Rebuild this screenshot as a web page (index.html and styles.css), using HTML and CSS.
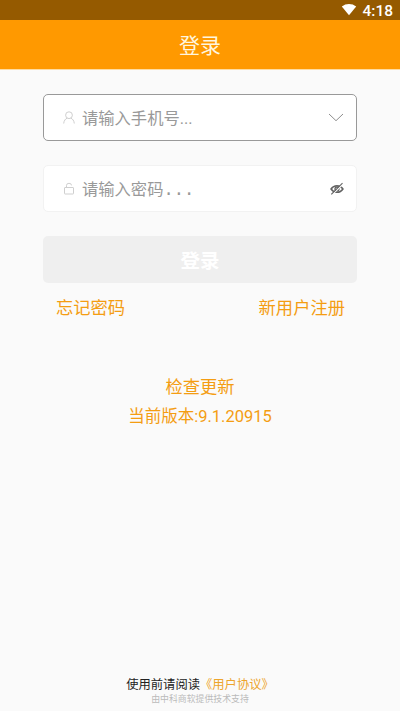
FILE: index.html
```html
<!DOCTYPE html>
<html lang="zh-CN">
<head>
<meta charset="utf-8">
<title>登录</title>
<link rel="stylesheet" href="styles.css">
</head>
<body>
<div class="screen">
  <div class="status">
    <svg class="wifi" width="16" height="13" viewBox="0 0 16 13"><path d="M8 12.300 .8 3.400Q4 1 8 1t7.200 2.400Z" fill="#fff"/></svg>
    <span class="time">4:18</span>
  </div>
  <header class="bar">登录</header>
  <main class="form">
    <div class="field phone">
      <svg class="lead" width="14" height="14" viewBox="0 0 14 14" fill="none" stroke="#cfcfcf"><circle cx="7" cy="4.200" r="3.400"/><path d="M1.700 12.500C2 9.500 3.400 7.800 5.300 7.100M12.300 12.500C12 9.500 10.600 7.800 8.700 7.100"/></svg>
      <span class="hint">请输入手机号...</span>
      <svg class="arrow" width="16" height="9" viewBox="0 0 16 9" fill="none" stroke="#8e8e8e"><path d="M1 1 8 7.700 15 1"/></svg>
    </div>
    <div class="field">
      <svg class="lead" width="14" height="14" viewBox="0 0 14 14" fill="none" stroke="#cfcfcf"><rect x="2.500" y="5.500" width="9" height="6.500" rx=".5"/><path d="M4.500 5.500V3.400Q4.500 1.300 7 1.300T9.500 3.400"/></svg>
      <span class="hint">请输入密码<span class="dots">...</span></span>
      <svg class="eye" width="14" height="14" viewBox="0 0 14 14" fill="none" stroke="#626262"><path d="M1 7Q3.200 3.700 7 3.700T13 7Q10.800 10.300 7 10.300T1 7Z" stroke-width="1.400"/><circle cx="7" cy="7" r="2" stroke-width="1.300"/><path d="M2.200 12.800 12.800 2" stroke="#fff" stroke-width="1.200"/><path d="M1.300 12.300 12.500 1.200" stroke-width="1.100"/></svg>
    </div>
    <div class="submit">登录</div>
    <div class="links"><span>忘记密码</span><span>新用户注册</span></div>
    <div class="update">检查更新</div>
    <div class="version">当前版本:9.1.20915</div>
  </main>
  <footer class="foot">
    <div class="terms">使用前请阅读<span class="agree">《用户协议》</span></div>
    <div class="support">由中科商软提供技术支持</div>
  </footer>
</div>
</body>
</html>
```
FILE: styles.css
```css
* { box-sizing: border-box; }
body {
  margin: 0;
  background: #fafafa;
  font-family: Roboto, "Noto Sans CJK SC", sans-serif;
}
.screen {
  height: 711px;
  display: flex;
  flex-direction: column;
  overflow: hidden;
  white-space: nowrap;
}
.status {
  flex: none;
  height: 20px;
  padding: 2px 7px 0 0;
  display: flex;
  justify-content: flex-end;
  align-items: center;
  gap: 5px;
  background: #955a00;
  color: #fff;
}
.wifi { margin-top: -4px; }
.time { font-size: 15.5px; font-weight: 500; line-height: 18px; }
.bar {
  flex: none;
  height: 50px;
  border-bottom: 1px solid #ffdca0;
  background: #ff9900;
  color: #fff6df;
  font-size: 21px;
  line-height: 52px;
  text-align: center;
}
.form { flex: 1; padding: 24px 43px 0; }
.field {
  height: 47px;
  margin-bottom: 24px;
  padding: 0 12px 0 18px;
  display: flex;
  align-items: center;
  border: 1px solid #f2f2f2;
  border-radius: 5px;
  background: #fff;
}
.phone { border-color: #999; }
.lead { flex: none; margin-right: 6px; }
.hint {
  flex: 1;
  padding-top: 2px;
  color: #999;
  font-size: 16.3px;
  line-height: 24px;
}
.dots { font-family: "DejaVu Sans Mono", monospace; font-size: 17px; }
.submit {
  height: 47px;
  border-radius: 5px;
  background: #efefef;
  color: #fff;
  font-size: 19.5px;
  font-weight: 700;
  line-height: 51px;
  text-align: center;
}
.links {
  margin-top: 12px;
  padding: 0 12px 0 13px;
  display: flex;
  justify-content: space-between;
}
.links, .update {
  color: #f49d12;
  font-size: 17.3px;
  line-height: 26px;
}
.update { margin-top: 53px; text-align: center; }
.version {
  margin-top: 4px;
  color: #f49d12;
  font-size: 16.5px;
  line-height: 26px;
  text-align: center;
}
.foot { flex: none; height: 35px; text-align: center; }
.terms { color: #222; font-size: 12.3px; line-height: 18px; }
.agree { color: #eda52c; }
.support { color: #bbb; font-size: 8.9px; line-height: 11px; }
```
